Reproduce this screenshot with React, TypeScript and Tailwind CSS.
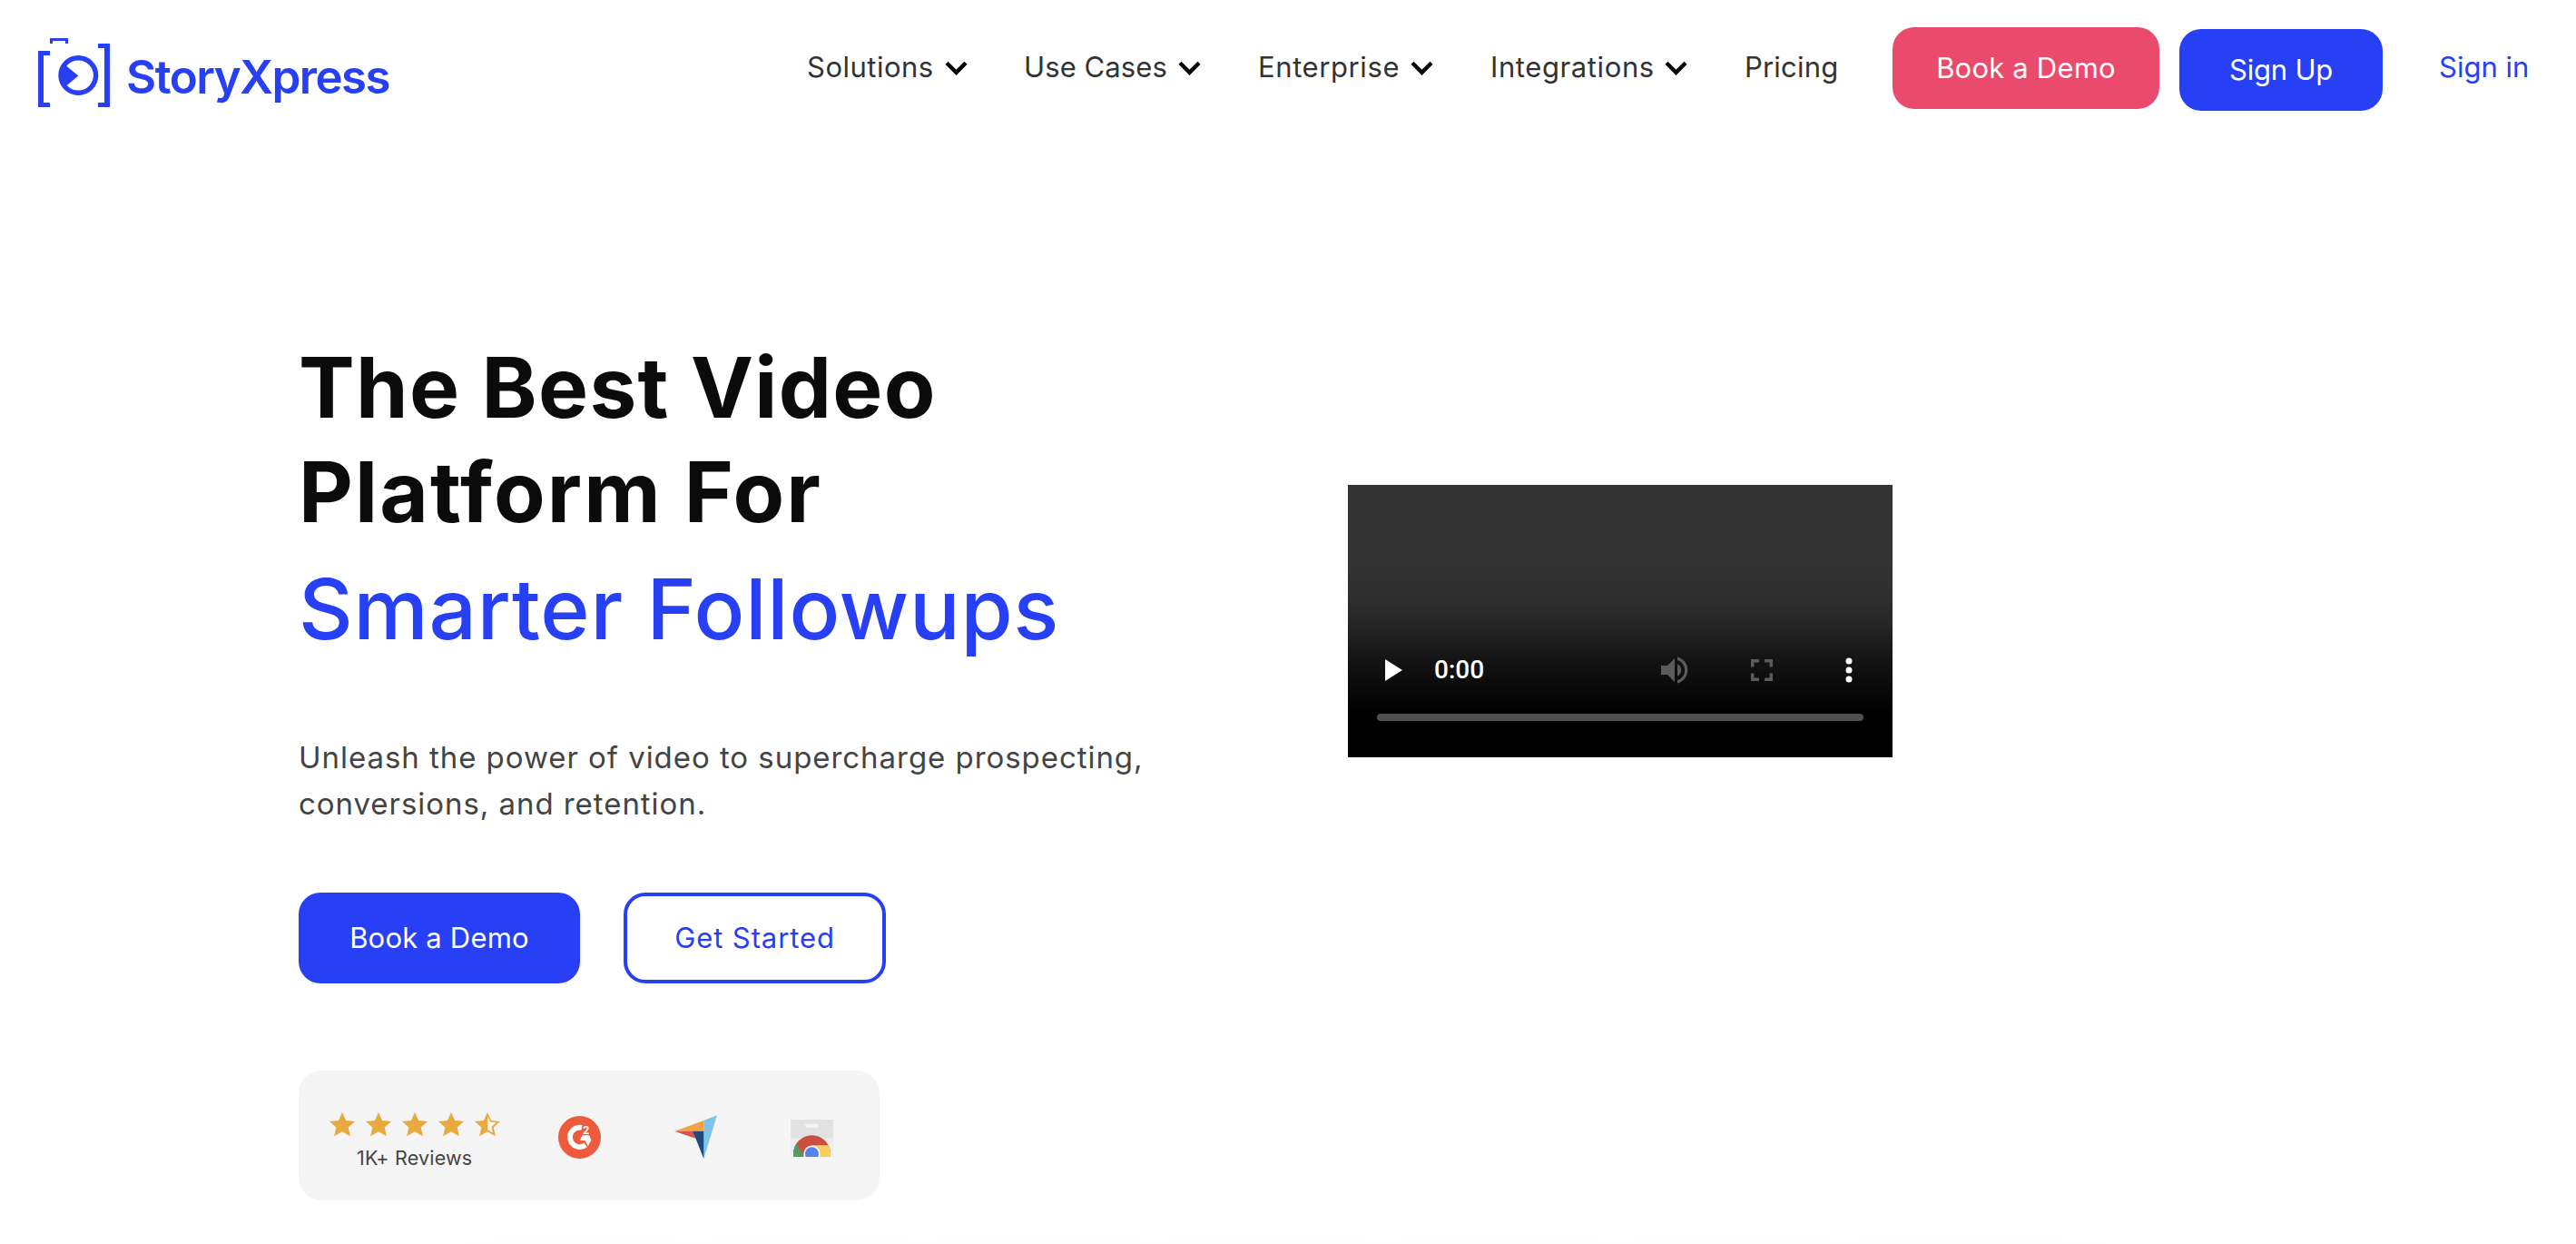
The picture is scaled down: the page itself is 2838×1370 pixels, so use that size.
const links = [
  { name: "Solutions", item: "w-[239px]", text: "w-[152px] tracking-[0.5px]", menu: true },
  { name: "Use Cases", item: "w-[258px]", text: "w-[170px] tracking-[0.1px]", menu: true },
  { name: "Enterprise", item: "w-[256px]", text: "w-[168px] tracking-[0.6px]", menu: true },
  { name: "Integrations", item: "w-[280px]", text: "w-[192px] tracking-[0.6px]", menu: true },
  { name: "Pricing", item: "w-[163px]", text: "w-[110px] tracking-[0.2px]", menu: false },
];

const starPoints =
  "14,0 18.1,8.9 28,9.9 20.7,16.6 22.9,26.3 14,21.3 5.1,26.3 7.3,16.6 0,9.9 9.9,8.9";

function Logo() {
  return (
    <div className="flex w-[889px] pl-[42px] pt-[42px] text-[#2740f5]">
      <svg width="80" height="77" viewBox="0 0 80 77" fill="currentColor">
        <path d="M0 14h13v5H6v52h7v5H0z" />
        <path d="M13 0h20v6h-3V3H16v3h-3z" />
        <path d="M66 6h13v70H66v-5h7V11h-7z" />
        <circle cx="44.3" cy="41" r="19.3" fill="none" stroke="currentColor" strokeWidth="5.4" />
        <path d="M44.3 41.5L31 30.5 25 35v13l6 4.5z" />
      </svg>
      <span className="ml-[17px] mt-[13px] text-[51px] leading-[60px] font-semibold tracking-[-1.5px]">
        StoryXpress
      </span>
    </div>
  );
}

function Chevron() {
  return (
    <svg width="25" height="16" viewBox="0 0 25 16" className="mt-[13px]">
      <path d="M2 2.2l10.5 10.6L23 2.2" fill="none" stroke="#000" strokeWidth="4.4" />
    </svg>
  );
}

function Header() {
  return (
    <header className="flex h-[150px] items-start text-[31px] leading-[40px] whitespace-nowrap">
      <Logo />
      <nav className="flex pt-[54px] text-[#333]">
        {links.map((link) => (
          <a key={link.name} href="#" className={"flex " + link.item}>
            <span className={link.text}>{link.name}</span>
            {link.menu && <Chevron />}
          </a>
        ))}
      </nav>
      <button className="mt-[30px] h-[90px] w-[294px] rounded-3xl bg-[#ea4a6b] text-white tracking-[0.2px]">
        Book a Demo
      </button>
      <button className="mt-[32px] ml-[22px] h-[90px] w-[224px] rounded-3xl bg-[#2740f5] text-white tracking-[-0.2px]">
        Sign Up
      </button>
      <a href="#" className="mt-[54px] ml-[62px] text-[#2740f5]">
        Sign in
      </a>
    </header>
  );
}

function Stars() {
  return (
    <div className="flex gap-3">
      {[1, 2, 3, 4].map((n) => (
        <svg key={n} width="28" height="27" viewBox="0 0 28 27" fill="#e8a93f">
          <polygon points={starPoints} />
        </svg>
      ))}
      <svg width="28" height="27" viewBox="0 0 28 27" fill="#e8a93f">
        <polygon points={starPoints} />
        <polygon points="14.4,4.5 16.9,10.4 23.6,11.3 18.6,15.9 20,22.6 14.4,19.3" fill="#f5f5f5" />
      </svg>
    </div>
  );
}

function G2() {
  return (
    <svg width="47" height="47" viewBox="0 0 47 47" className="mt-[50px]">
      <circle cx="23.5" cy="23.5" r="23.5" fill="#ed5a3c" />
      <path d="M26 12.9A10.7 10.7 0 1 0 30.2 31.9" fill="none" stroke="#fff" strokeWidth="5.8" />
      <path d="M26.6 21.3h7.6l2.2 5.2-3.6 6.8-3.3-6.3h-5.8z" fill="#fff" />
      <text x="27" y="19.6" fontSize="11.5" fontWeight="700" fill="#fff" fontFamily="Inter">2</text>
    </svg>
  );
}

function Capterra() {
  return (
    <svg width="47" height="48" viewBox="0 0 47 48" className="mt-[49px]">
      <path d="M0 17.8L32.3 6v11.8z" fill="#f2a34a" />
      <path d="M32.3 6L47 .3 32.3 48z" fill="#80c3e9" />
      <path d="M0 17.8h21l2.6 8z" fill="#d9534f" />
      <path d="M20.3 17.8h12V48z" fill="#1d4a7a" />
    </svg>
  );
}

function ChromeStore() {
  return (
    <svg width="47" height="41" viewBox="0 0 47 41" className="mt-[54px]">
      <clipPath id="dome">
        <circle cx="23.5" cy="37.7" r="20.5" />
      </clipPath>
      <path d="M0 0h47v39a2 2 0 0 1-2 2H2a2 2 0 0 1-2-2z" fill="#ededed" />
      <path d="M0 0h47v20.5H0z" fill="#e2e2e2" />
      <rect x="16" y="4.7" width="15" height="4" rx="2" fill="#f5f5f5" />
      <g clipPath="url(#dome)">
        <path d="M0 10h47v31H0z" fill="#c9503f" />
        <path d="M0 14.9L14.9 41H0z" fill="#4b9e5f" />
        <path d="M23.5 28.3H47V41H23.5z" fill="#f8cf5e" />
      </g>
      <circle cx="23.5" cy="37.7" r="9.2" fill="#f5f5f5" />
      <circle cx="23.5" cy="37.7" r="7.5" fill="#5383ec" />
    </svg>
  );
}

function Reviews() {
  return (
    <div className="mt-[96px] flex h-[143px] w-[640px] rounded-[25px] bg-[#f5f5f5] pl-[34px]">
      <div className="w-[188px] pt-[46px]">
        <Stars />
        <p className="mt-[11px] pl-[30px] text-[21.5px] leading-[24px] text-[#444] tracking-[0.2px] whitespace-nowrap">
          1K+ Reviews
        </p>
      </div>
      <div className="ml-[64px] flex items-start gap-[81px]">
        <G2 />
        <Capterra />
        <ChromeStore />
      </div>
    </div>
  );
}

function VideoPlayer() {
  return (
    <div className="mt-[384px] h-[300px] w-[600px] bg-[linear-gradient(to_bottom,#333_0%,#333_30%,#2e2e2e_42%,#252525_52%,#151515_63%,#0b0b0b_73%,#010101_84%,#000_100%)] pt-[184px]">
      <div className="flex h-10 items-center pl-[41px]">
        <svg width="19" height="24" viewBox="0 0 19 24" fill="#fff">
          <path d="M0 0l19 12L0 24z" />
        </svg>
        <span className="ml-[35px] w-[250px] font-[Roboto] text-[28px] font-medium text-white">0:00</span>
        <svg width="30" height="30" viewBox="0 0 30 30" fill="#5c5c5c">
          <path d="M0 10h7l8-8v26l-8-8H0z" />
          <path d="M18 8.2a7.6 7.6 0 0 1 0 13.6z" />
          <path d="M18 .6a14.8 14.8 0 0 1 0 28.8v-3.3a11.6 11.6 0 0 0 0-22.2z" />
        </svg>
        <svg width="24" height="24" viewBox="0 0 24 24" className="ml-[69px]">
          <path d="M1.7 8.5V1.7H9M15 1.7h7.3v6.8M22.3 15.5v6.8H15M9 22.3H1.7v-6.8" fill="none" stroke="#5c5c5c" strokeWidth="3.4" />
        </svg>
        <svg width="8" height="28" viewBox="0 0 8 28" fill="#fff" className="ml-[80px]">
          <circle cx="4" cy="4" r="3.5" />
          <circle cx="4" cy="14" r="3.5" />
          <circle cx="4" cy="24" r="3.5" />
        </svg>
      </div>
      <div className="mx-8 mt-7 h-2 rounded-full bg-[#505050]"></div>
    </div>
  );
}

export default function App() {
  return (
    <div className="h-[1370px] overflow-hidden bg-white font-[Inter,sans-serif]">
      <Header />
      <main className="flex h-[1172px] pl-[329px]">
        <div className="w-[1156px] pt-[219px]">
          <h1 className="text-[92.5px] leading-[115px] whitespace-nowrap">
            <span className="block font-bold text-[#0b0b0b] tracking-[1.3px]">The Best Video</span>
            <span className="block font-bold text-[#0b0b0b] tracking-[2.1px]">Platform For</span>
            <span className="mt-[14px] block font-medium text-[#2740f5] tracking-[0.8px]">
              Smarter Followups
            </span>
          </h1>
          <p className="mt-[81px] w-[960px] text-[33px] leading-[51px] text-[#444] tracking-[0.95px]">
            Unleash the power of video to supercharge prospecting, conversions, and retention.
          </p>
          <div className="mt-[72px] flex gap-12 text-[31px]">
            <button className="h-[100px] w-[310px] rounded-3xl bg-[#2740f5] text-white tracking-[0.2px]">
              Book a Demo
            </button>
            <button className="h-[100px] w-[289px] rounded-3xl border-4 border-[#2740f5] text-[#2740f5] tracking-[0.9px]">
              Get Started
            </button>
          </div>
          <Reviews />
        </div>
        <VideoPlayer />
      </main>
      <section className="mx-auto mt-[88px] h-[400px] w-[2040px] rounded-3xl shadow-[0_0_140px_rgba(0,0,0,0.03)]"></section>
    </div>
  );
}
